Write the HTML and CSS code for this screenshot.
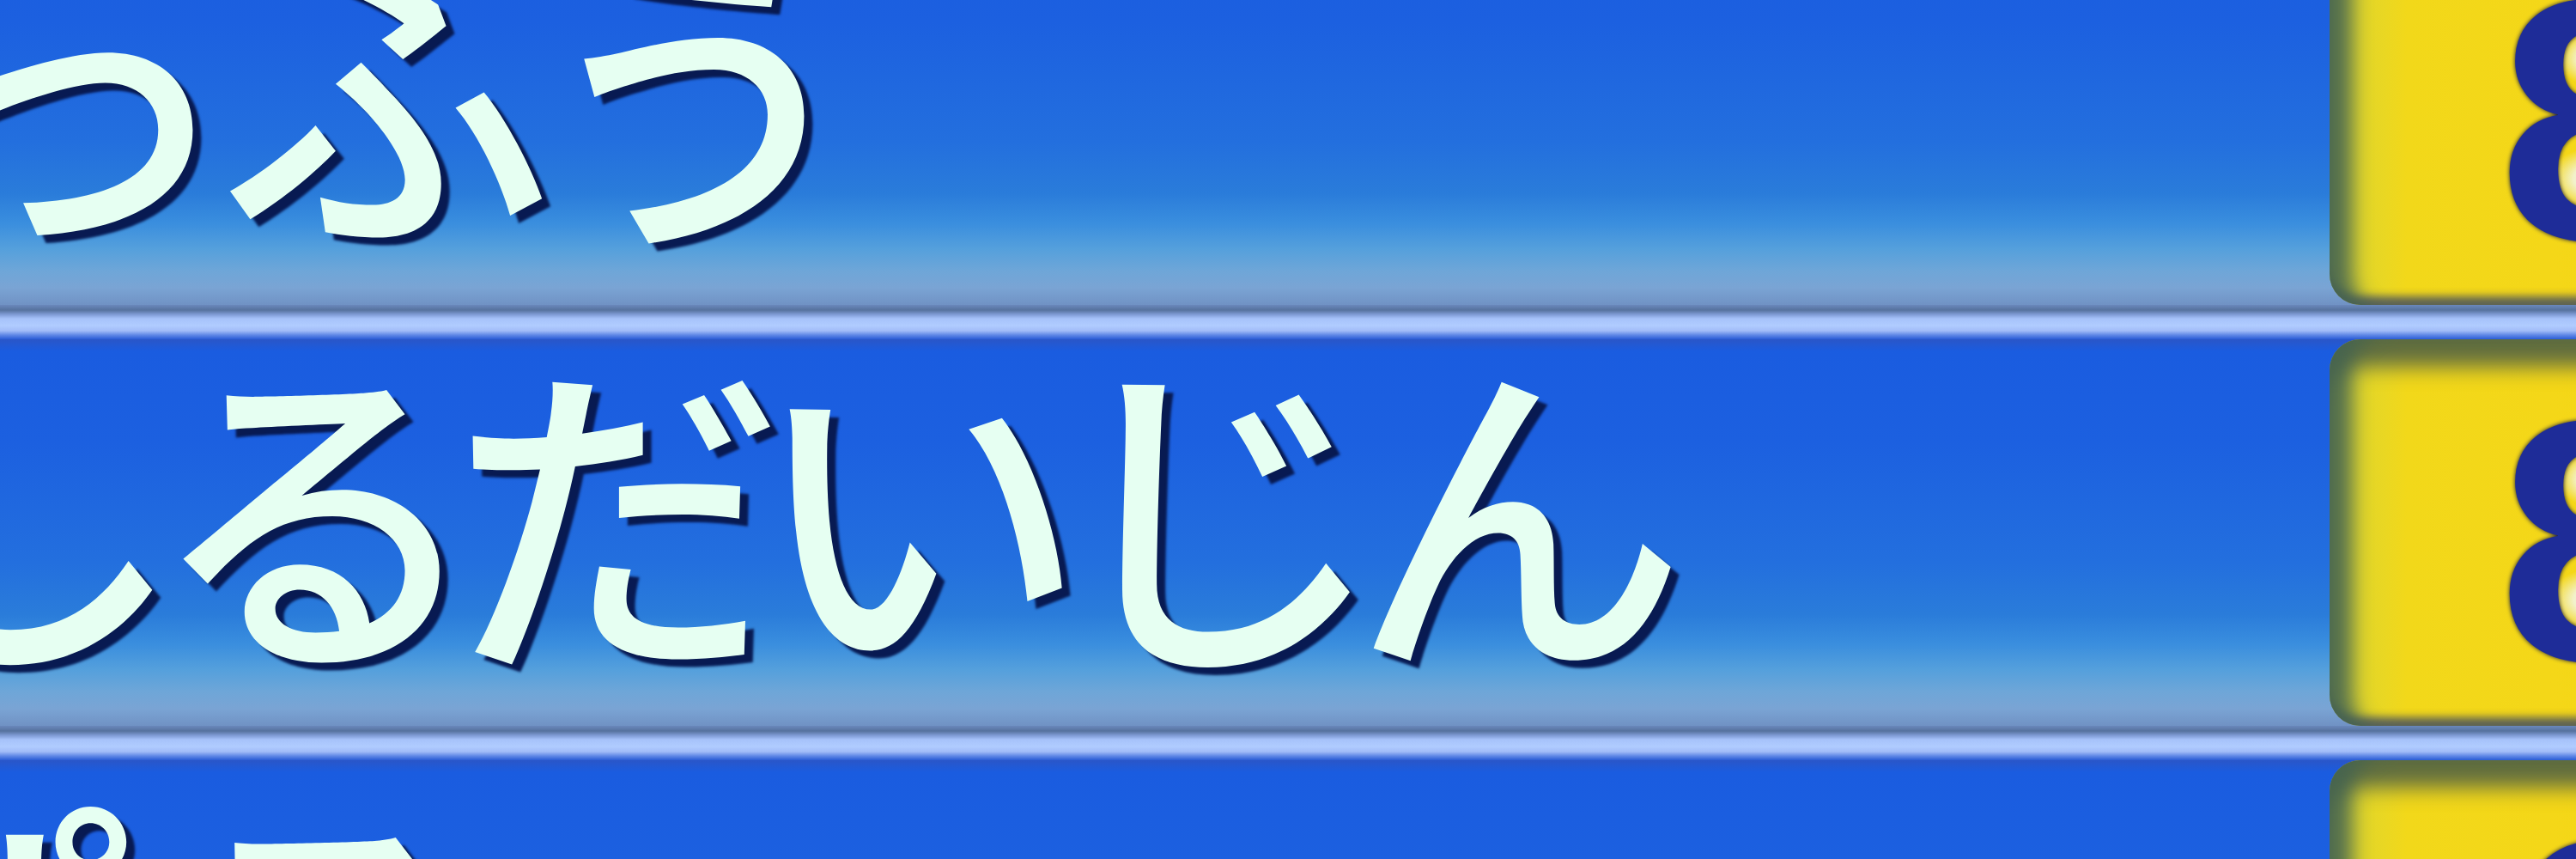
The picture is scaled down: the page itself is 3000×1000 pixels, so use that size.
FILE: index.html
```html
<!DOCTYPE html>
<html lang="ja">
<head>
<meta charset="utf-8">
<title>Ranking</title>
<link rel="stylesheet" href="styles.css">
</head>
<body>
<div class="board">
  <div class="row">
    <div class="bar">
      <div class="name"><span class="txt t1">っふう</span></div>
      <div class="score"><span class="num eight">8</span></div>
    </div>
    <div class="divider"></div>
  </div>
  <div class="row">
    <div class="bar">
      <div class="name"><span class="txt t2">しるだいじん</span></div>
      <div class="score"><span class="num eight">8</span></div>
    </div>
    <div class="divider"></div>
  </div>
  <div class="row">
    <div class="bar">
      <div class="name"><span class="txt t3">ぱろ</span></div>
      <div class="score"><span class="num">6</span></div>
    </div>
    <div class="divider"></div>
  </div>
</div>
</body>
</html>
```
FILE: styles.css
```css
html, body {
  margin: 0;
  padding: 0;
  background: #1c5cd8;
}
body {
  width: 3000px;
  height: 1000px;
  overflow: hidden;
}
.board {
  width: 3100px;
  display: flex;
  flex-direction: column;
  margin-top: -95px;
}
.row {
  display: flex;
  flex-direction: column;
}
.bar {
  height: 450px;
  display: flex;
  background: linear-gradient(180deg,
    #2a56c8 0px,
    #1a5ce0 14px,
    #1c60e0 120px,
    #236fde 260px,
    #2a7cda 320px,
    #3a8ede 355px,
    #55a0dc 385px,
    #6ea6d8 410px,
    #7aa4d4 430px,
    #7092c4 450px);
}
.name {
  width: 2713px;
  flex: none;
  display: flex;
  align-items: center;
  overflow: hidden;
}
.txt {
  font-family: "Noto Sans CJK JP", "Noto Sans", sans-serif;
  font-weight: 500;
  font-size: 390px;
  line-height: 1;
  color: #e6fff2;
  white-space: nowrap;
  text-shadow: 10px 9px 3px #081a52;
  transform: translateY(-38px);
}
.t1 {
  letter-spacing: -25px;
  margin-left: -111px;
}
.t2 {
  letter-spacing: -40px;
  margin-left: -176px;
}
.t3 {
  letter-spacing: 30px;
  margin-left: -235px;
  transform: translateY(-10px);
}
.score {
  flex: 1;
  border-radius: 36px 0 0 36px;
  background: linear-gradient(90deg, #c8d040 0px, #e2d62a 40px, #f2d81a 90px, #f6d616 100%);
  box-shadow:
    inset 40px 0 22px -14px rgba(70, 100, 80, 0.9),
    inset 0 48px 24px -16px rgba(70, 90, 70, 0.85),
    inset 0 -14px 10px -4px rgba(60, 70, 100, 0.8);
  display: flex;
  align-items: center;
  padding-left: 197px;
}
.num {
  font-family: "Liberation Sans", Arial, sans-serif;
  font-weight: 700;
  font-size: 400px;
  line-height: 1;
  color: #1e2c98;
  text-shadow: 0 0 5px #0a0e40;
  transform: translateY(10px);
}
.eight {
  background:
    radial-gradient(ellipse 42px 32px at 111px 128px, #f2f2cc 45%, rgba(242, 242, 204, 0) 100%),
    radial-gradient(ellipse 52px 36px at 111px 268px, #f2f2cc 45%, rgba(242, 242, 204, 0) 100%);
}
.divider {
  height: 40px;
  background: linear-gradient(180deg,
    #6a88bc 0px,
    #56729e 6px,
    #7e9ad4 11px,
    #a6c2fa 16px,
    #b0ccff 24px,
    #a2bcf8 30px,
    #6088e6 35px,
    #2a5cd6 40px);
}
```
